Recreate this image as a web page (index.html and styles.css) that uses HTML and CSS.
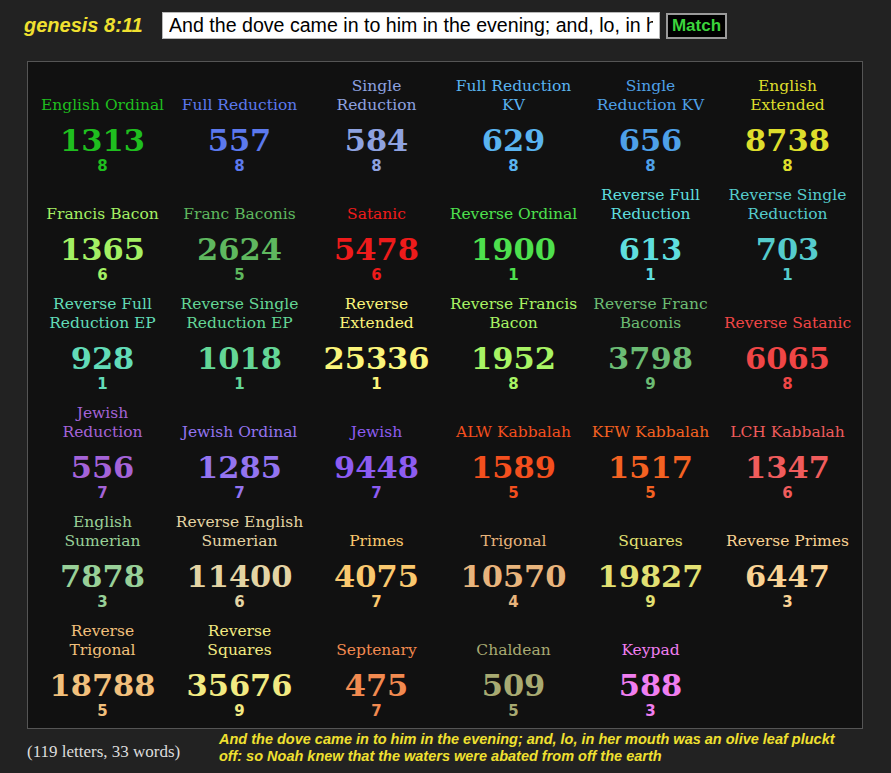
FILE: index.html
```html
<!DOCTYPE html>
<html lang="en">
<head>
<meta charset="utf-8">
<title>Gematria</title>
<link rel="stylesheet" href="styles.css">
</head>
<body>
<header class="bar">
  <span class="ref">genesis 8:11</span>
  <input class="phrase" type="text" value="And the dove came in to him in the evening; and, lo, in her mouth was an olive leaf pluckt off: so Noah knew that the waters were abated from off the earth">
  <button class="match">Match</button>
</header>
<main class="board">
  <div class="cell eo"><div class="name">English Ordinal</div><div class="val">1313</div><div class="red">8</div></div>
  <div class="cell fr"><div class="name">Full Reduction</div><div class="val">557</div><div class="red">8</div></div>
  <div class="cell sr"><div class="name">Single<br>Reduction</div><div class="val">584</div><div class="red">8</div></div>
  <div class="cell frkv"><div class="name">Full Reduction<br>KV</div><div class="val">629</div><div class="red">8</div></div>
  <div class="cell srkv"><div class="name">Single<br>Reduction KV</div><div class="val">656</div><div class="red">8</div></div>
  <div class="cell ee"><div class="name">English<br>Extended</div><div class="val">8738</div><div class="red">8</div></div>

  <div class="cell fb"><div class="name">Francis Bacon</div><div class="val">1365</div><div class="red">6</div></div>
  <div class="cell fbs"><div class="name">Franc Baconis</div><div class="val">2624</div><div class="red">5</div></div>
  <div class="cell sat"><div class="name">Satanic</div><div class="val">5478</div><div class="red">6</div></div>
  <div class="cell ro"><div class="name">Reverse Ordinal</div><div class="val">1900</div><div class="red">1</div></div>
  <div class="cell rfr"><div class="name">Reverse Full<br>Reduction</div><div class="val">613</div><div class="red">1</div></div>
  <div class="cell rsr"><div class="name">Reverse Single<br>Reduction</div><div class="val">703</div><div class="red">1</div></div>

  <div class="cell rfrep"><div class="name">Reverse Full<br>Reduction EP</div><div class="val">928</div><div class="red">1</div></div>
  <div class="cell rsrep"><div class="name">Reverse Single<br>Reduction EP</div><div class="val">1018</div><div class="red">1</div></div>
  <div class="cell rex"><div class="name">Reverse<br>Extended</div><div class="val">25336</div><div class="red">1</div></div>
  <div class="cell rfb"><div class="name">Reverse Francis<br>Bacon</div><div class="val">1952</div><div class="red">8</div></div>
  <div class="cell rfbs"><div class="name">Reverse Franc<br>Baconis</div><div class="val">3798</div><div class="red">9</div></div>
  <div class="cell rsat"><div class="name">Reverse Satanic</div><div class="val">6065</div><div class="red">8</div></div>

  <div class="cell jr"><div class="name">Jewish<br>Reduction</div><div class="val">556</div><div class="red">7</div></div>
  <div class="cell jo"><div class="name">Jewish Ordinal</div><div class="val">1285</div><div class="red">7</div></div>
  <div class="cell jw"><div class="name">Jewish</div><div class="val">9448</div><div class="red">7</div></div>
  <div class="cell alw"><div class="name">ALW Kabbalah</div><div class="val">1589</div><div class="red">5</div></div>
  <div class="cell kfw"><div class="name">KFW Kabbalah</div><div class="val">1517</div><div class="red">5</div></div>
  <div class="cell lch"><div class="name">LCH Kabbalah</div><div class="val">1347</div><div class="red">6</div></div>

  <div class="cell es"><div class="name">English<br>Sumerian</div><div class="val">7878</div><div class="red">3</div></div>
  <div class="cell res"><div class="name">Reverse English<br>Sumerian</div><div class="val">11400</div><div class="red">6</div></div>
  <div class="cell pr"><div class="name">Primes</div><div class="val">4075</div><div class="red">7</div></div>
  <div class="cell tri"><div class="name">Trigonal</div><div class="val">10570</div><div class="red">4</div></div>
  <div class="cell sq"><div class="name">Squares</div><div class="val">19827</div><div class="red">9</div></div>
  <div class="cell rpr"><div class="name">Reverse Primes</div><div class="val">6447</div><div class="red">3</div></div>

  <div class="cell rtri"><div class="name">Reverse<br>Trigonal</div><div class="val">18788</div><div class="red">5</div></div>
  <div class="cell rsq"><div class="name">Reverse<br>Squares</div><div class="val">35676</div><div class="red">9</div></div>
  <div class="cell sep"><div class="name">Septenary</div><div class="val">475</div><div class="red">7</div></div>
  <div class="cell chal"><div class="name">Chaldean</div><div class="val">509</div><div class="red">5</div></div>
  <div class="cell key"><div class="name">Keypad</div><div class="val">588</div><div class="red">3</div></div>
</main>
<footer class="foot">
  <span class="count">(119 letters, 33 words)</span>
  <p class="verse">And the dove came in to him in the evening; and, lo, in her mouth was an olive leaf pluckt off: so Noah knew that the waters were abated from off the earth</p>
</footer>
</body>
</html>
```
FILE: styles.css
```css
html, body {
  margin: 0;
  padding: 0;
}
body {
  background: #222222;
  font-family: "Liberation Sans", Arial, sans-serif;
  width: 891px;
  height: 773px;
  overflow: hidden;
}
.bar {
  display: flex;
  align-items: center;
  padding: 12px 0 0 24px;
  height: 27px;
}
.ref {
  width: 138px;
  color: #f0e030;
  font-weight: bold;
  font-style: italic;
  font-size: 20px;
}
.phrase {
  box-sizing: border-box;
  width: 498px;
  height: 27px;
  margin: 0;
  padding: 0 6px;
  border: 1px solid #b8b8b8;
  background: #fff;
  color: #000;
  font: 19.6px "Liberation Sans", Arial, sans-serif;
  outline: none;
}
.match {
  box-sizing: border-box;
  margin: 0 0 0 6px;
  width: 61px;
  height: 26px;
  padding: 0;
  background: #000;
  border: 2px solid #9a9a9a;
  color: #3cd43c;
  font: bold 17px "Liberation Sans", Arial, sans-serif;
}
.board {
  box-sizing: border-box;
  width: 836px;
  margin: 22px 0 0 27px;
  padding: 12px 6px 0;
  border: 1px solid #555;
  background: #111111;
  display: grid;
  grid-template-columns: repeat(6, 137px);
  grid-auto-rows: 109px;
}
.cell {
  display: flex;
  flex-direction: column;
  justify-content: flex-end;
  align-items: center;
  padding-bottom: 8px;
  text-align: center;
}
.name {
  font: 15.5px/19px "DejaVu Serif", serif;
  margin-bottom: 8px;
  white-space: nowrap;
}
.val {
  font: bold 30.5px/34px "DejaVu Serif", serif;
}
.red {
  font: bold 15px/18px "DejaVu Sans", sans-serif;
}
.eo { color: #1fbe1f; }
.fr { color: #5c79ee; }
.sr { color: #8ea2e0; }
.frkv { color: #5ab4f0; }
.srkv { color: #4ea0e8; }
.ee { color: #dede2c; }
.fb { color: #a4f064; }
.fbs { color: #5fb85f; }
.sat { color: #ee1b1b; }
.ro { color: #4ee04e; }
.rfr { color: #5fdede; }
.rsr { color: #55cccc; }
.rfrep { color: #62dcb8; }
.rsrep { color: #64d696; }
.rex { color: #fbf57a; }
.rfb { color: #a8f464; }
.rfbs { color: #6cbc74; }
.rsat { color: #f04646; }
.jr { color: #a463d8; }
.jo { color: #9474f0; }
.jw { color: #8d5cf2; }
.alw { color: #f44f1e; }
.kfw { color: #f46222; }
.lch { color: #f05c5c; }
.es { color: #98d098; }
.res { color: #e4d4a4; }
.pr { color: #fac86e; }
.tri { color: #e8b47c; }
.sq { color: #e2e072; }
.rpr { color: #fad394; }
.rtri { color: #f2c07c; }
.rsq { color: #f2ea82; }
.sep { color: #f28a50; }
.chal { color: #a8aa72; }
.key { color: #f07ef0; }
.foot {
  display: flex;
  align-items: center;
  padding: 2px 0 0 27px;
}
.count {
  width: 192px;
  padding-top: 7px;
  color: #dddddd;
  font: 17px "Liberation Serif", "Times New Roman", serif;
}
.verse {
  margin: 0;
  width: 632px;
  color: #f0e030;
  font: italic bold 14.5px/17px "Liberation Sans", Arial, sans-serif;
}
```
